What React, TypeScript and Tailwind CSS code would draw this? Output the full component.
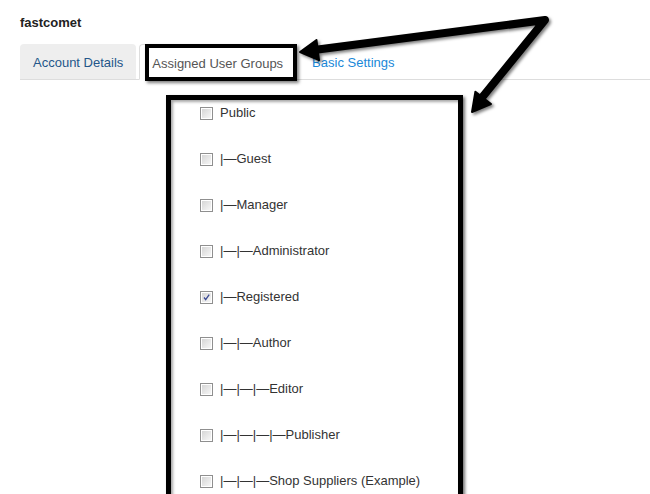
import React from "react";

const groups: { label: string; checked?: boolean }[] = [
  { label: "Public" },
  { label: "|—Guest" },
  { label: "|—Manager" },
  { label: "|—|—Administrator" },
  { label: "|—Registered", checked: true },
  { label: "|—|—Author" },
  { label: "|—|—|—Editor" },
  { label: "|—|—|—|—Publisher" },
  { label: "|—|—|—Shop Suppliers (Example)" },
];

function Checkbox({ checked }: { checked?: boolean }) {
  return (
    <div className="w-[13px] h-[13px] border border-[#8f8f8f] bg-white p-px shrink-0">
      <div className="w-full h-full bg-gradient-to-br from-[#d6d6d6] to-[#f7f7f7] relative">
        {checked && (
          <svg viewBox="0 0 11 11" className="absolute inset-0 w-full h-full">
            <path d="M2.5 5.5 L4.5 8 L8.8 2" stroke="#3b4a94" strokeWidth="1.6" fill="none" />
          </svg>
        )}
      </div>
    </div>
  );
}

export default function App() {
  return (
    <div
      className="w-[650px] h-[494px] relative overflow-hidden bg-white"
      style={{ fontFamily: '"Liberation Sans", Arial, sans-serif' }}
    >
      <div className="pl-5 pt-[14px]">
        <div className="text-[13px] leading-[18px] font-bold text-[#222]">fastcomet</div>
        <div className="mt-[12px] flex items-end border-b border-[#dddddd] h-[36px]">
          <div className="h-[35px] px-[13px] pt-px leading-[35px] text-[13px] text-[#24568a] bg-[#eeeeee] rounded-t-[4px]">
            Account Details
          </div>
          <div className="ml-[3px] h-[36px] -mb-px pl-[12px] pr-3 pt-px leading-[35px] text-[13px] text-[#555] bg-white border border-[#dddddd] border-b-white rounded-t-[4px]">
            Assigned User Groups
          </div>
          <div className="ml-[3px] h-[35px] px-[13px] pt-px leading-[35px] text-[13px] text-[#1a88d8]">
            Basic Settings
          </div>
        </div>
        <div className="ml-[146px] mt-[15px] w-[297px] h-[420px] border-[5px] border-black shadow-[2px_2px_3px_rgba(0,0,0,0.55),inset_2px_2px_3px_rgba(0,0,0,0.35)] pl-[29px] pt-[3px] flex flex-col gap-[26px]">
          {groups.map((g) => (
            <div key={g.label} className="flex items-center h-[20px] gap-[7px]">
              <Checkbox checked={g.checked} />
              <span className="text-[13px] text-[#333] whitespace-nowrap">{g.label}</span>
            </div>
          ))}
        </div>
      </div>

      {/* Annotation rectangle around active tab */}
      <div className="absolute left-[145px] top-[44px] w-[152px] h-[37px] border-[4px] border-black shadow-[2px_2px_3px_rgba(0,0,0,0.5)]" />

      {/* Annotation arrows */}
      <svg className="absolute inset-0 pointer-events-none" width="650" height="494" viewBox="0 0 650 494">
        <defs>
          <filter id="sh" x="-10%" y="-10%" width="130%" height="130%">
            <feDropShadow dx="2" dy="2" stdDeviation="1.5" floodColor="#000" floodOpacity="0.5" />
          </filter>
        </defs>
        <g filter="url(#sh)">
          <polyline
            points="314,50 545,20 480,100"
            fill="none"
            stroke="#000"
            strokeWidth="8"
            strokeLinejoin="round"
            strokeLinecap="round"
          />
          <polygon points="300,52 319,60 316.5,40" fill="#000" stroke="#000" strokeWidth="2" strokeLinejoin="round" />
          <polygon points="472,112 491,104 475.4,91.7" fill="#000" stroke="#000" strokeWidth="2" strokeLinejoin="round" />
        </g>
      </svg>
    </div>
  );
}
